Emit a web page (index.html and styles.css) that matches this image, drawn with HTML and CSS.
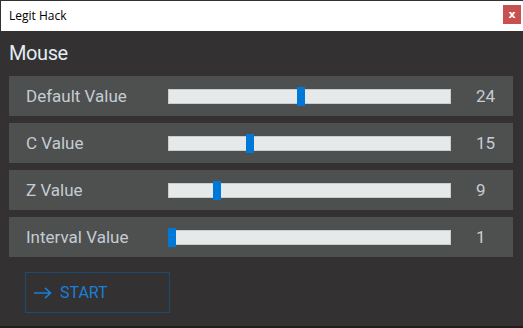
FILE: index.html
```html
<!DOCTYPE html>
<html>
<head>
<link rel="stylesheet" href="styles.css">
</head>
<body>

<div class="window">
    <div class="titlebar">
        <span class="title">Legit Hack</span>
        <button class="close">x</button>
    </div>
    <div class="content">
        <h2>Mouse</h2>
        <div class="rows">
            <div class="row">
                <span class="label">Default Value</span>
                <div class="track"><div class="thumb" style="left: 45.9%"></div></div>
                <span class="value">24</span>
            </div>
            <div class="row">
                <span class="label">C Value</span>
                <div class="track"><div class="thumb" style="left: 27.8%"></div></div>
                <span class="value">15</span>
            </div>
            <div class="row">
                <span class="label">Z Value</span>
                <div class="track"><div class="thumb" style="left: 16%"></div></div>
                <span class="value">9</span>
            </div>
            <div class="row">
                <span class="label">Interval Value</span>
                <div class="track"><div class="thumb" style="left: 0%"></div></div>
                <span class="value">1</span>
            </div>
        </div>
        <button class="start">
            <svg width="18" height="12" viewBox="0 0 18 12">
                <path d="M0 6 H16.5 M11 0.8 L16.5 6 L11 11.2" fill="none" stroke="#1a7fd8" stroke-width="1.6"/>
            </svg>
            START
        </button>
    </div>
</div>

</body>
</html>
```

FILE: styles.css
```css
body {
    margin: 0;
    background-color: #1e1e1e;
    font-family: Roboto, sans-serif;
}

.window {
    box-sizing: border-box;
    width: 523px;
    height: 326px;
    padding-top: 1px;
    background-color: #333132;
}

.titlebar {
    display: flex;
    align-items: center;
    justify-content: space-between;
    height: 30px;
    margin-left: 1px;
    padding: 0 2px 0 8px;
    background-color: #fff;
}

.title {
    font-family: "Open Sans", sans-serif;
    font-size: 12px;
    color: #000;
    margin-top: -1px;
}

.close {
    width: 18px;
    height: 19px;
    margin-top: -4px;
    border: none;
    padding: 0;
    background-color: #c75050;
    color: #fff;
    font-family: "DejaVu Sans", sans-serif;
    font-weight: bold;
    font-size: 11px;
    line-height: 17px;
}

.content {
    padding: 0 10px 0 9px;
}

h2 {
    margin: 10px 0 0 0;
    font-size: 20px;
    font-weight: normal;
    line-height: 25px;
    letter-spacing: -0.4px;
    color: #e4ecf4;
}

.rows {
    display: flex;
    flex-direction: column;
    gap: 7px;
    margin-top: 10px;
}

.row {
    display: grid;
    grid-template-columns: 117px 283px auto;
    column-gap: 25px;
    align-items: center;
    height: 40px;
    padding-left: 17px;
    background-color: #4e504f;
    font-size: 17px;
    color: #c4ccd4;
}

.track {
    position: relative;
    box-sizing: border-box;
    height: 15px;
    border: 1px solid #c9cccd;
    background-color: #e6e9ea;
}

.thumb {
    position: absolute;
    top: -3px;
    width: 8px;
    height: 19px;
    margin-left: -1px;
    background-color: #0078d7;
}

.start {
    display: flex;
    align-items: center;
    gap: 8px;
    box-sizing: border-box;
    width: 145px;
    height: 41px;
    margin: 15px 0 0 16px;
    padding: 0 0 0 8px;
    border: 1px solid #1d4b72;
    background-color: transparent;
    color: #1a7fd8;
    font-family: Roboto, sans-serif;
    font-size: 16px;
}
```
